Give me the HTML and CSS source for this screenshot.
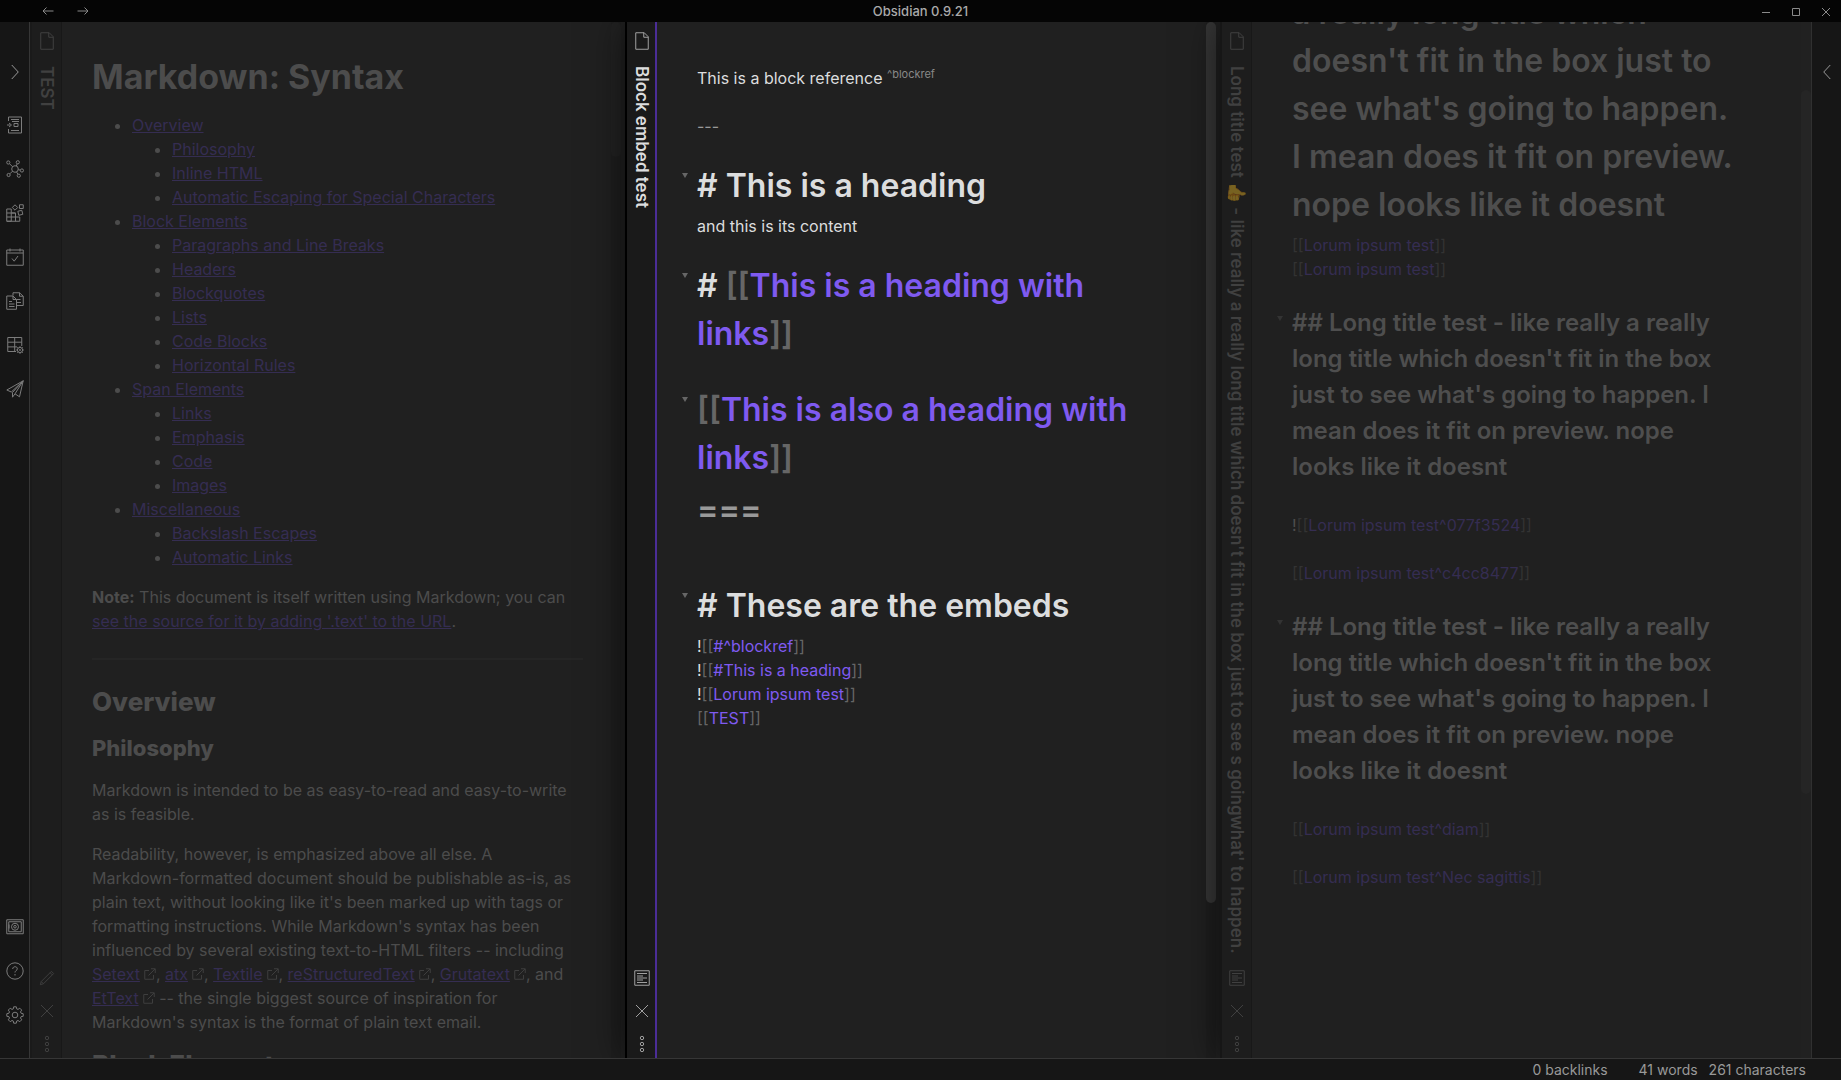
FILE: index.html
```html
<!DOCTYPE html>
<html lang="en">
<head>
<meta charset="utf-8">
<title>Obsidian 0.9.21</title>
<link rel="stylesheet" href="styles.css">
</head>
<body>
<svg class="sprite" aria-hidden="true">
  <symbol id="file" viewBox="0 0 14 18"><path d="M.75.75h8.500l4 4v12.500H.75zM8.750.75v4.500h4.500"/></symbol>
  <symbol id="cross" viewBox="0 0 14 14"><path d="M1 1l12 12M13 1L1 13"/></symbol>
  <symbol id="dots" viewBox="0 0 6 18"><circle cx="3" cy="3" r="1.700"/><circle cx="3" cy="9" r="1.700"/><circle cx="3" cy="15" r="1.700"/></symbol>
  <symbol id="pencil" viewBox="0 0 18 18"><path d="M1.500 16.500l1-3.500L14 1.500l2.500 2.500L5 15.500zM2.500 13L5 15.500M12.500 3L15 5.500"/></symbol>
  <symbol id="preview" viewBox="0 0 16 16"><path d="M.75.75h14.500v14.500H.75zM3 3.500h10M3 6h6M3 8h10M3 10h6M3 12.500h10"/></symbol>
  <symbol id="external" viewBox="0 0 12 12"><path d="M5 2.500H.75v8.750H9.500V7M7 .75h4.250V5M11 1L4.500 7.500"/></symbol>
</svg>

<header class="titlebar">
  <nav class="history">
    <button type="button" aria-label="Back"><svg width="12" height="8" viewBox="0 0 12 8"><path d="M11.500 4H1M4.500.5L1 4l3.500 3.500"/></svg></button>
    <button type="button" aria-label="Forward"><svg width="12" height="8" viewBox="0 0 12 8"><path d="M.5 4H11M7.500.5L11 4 7.500 7.500"/></svg></button>
  </nav>
  <h1 class="app-name">Obsidian 0.9.21</h1>
  <div class="window-controls">
    <button type="button" aria-label="Minimize"><svg width="10" height="10" viewBox="0 0 10 10"><path d="M1 5.500h8"/></svg></button>
    <button type="button" aria-label="Maximize"><svg width="10" height="10" viewBox="0 0 10 10"><path d="M1.500 1.500h7v7h-7z"/></svg></button>
    <button type="button" aria-label="Close"><svg width="10" height="10" viewBox="0 0 10 10"><path d="M1 1l8 8M9 1L1 9"/></svg></button>
  </div>
</header>

<div class="app">
  <aside class="ribbon">
    <button type="button" class="expand" aria-label="Expand left sidebar"><svg width="8" height="16" viewBox="0 0 8 16"><path d="M.75 1l6.500 7-6.500 7"/></svg></button>
    <button type="button" aria-label="Open quick switcher"><svg width="18" height="18" viewBox="0 0 18 18"><path d="M2.500 5V1h13v16h-13v-4M5 3.500h8M6 5.500h7M1 9h3M3 7l2.500 2L3 11M8 7.500h4v3H8zM5 14.500h8"/></svg></button>
    <button type="button" aria-label="Open graph view"><svg width="18" height="18" viewBox="0 0 18 18"><circle cx="9" cy="9" r="3.300"/><circle cx="2.300" cy="2.500" r="1.600"/><circle cx="11.800" cy="2.300" r="1.600"/><circle cx="15.900" cy="10.500" r="1.600"/><circle cx="2.600" cy="15" r="1.600"/><circle cx="12.800" cy="15.700" r="1.600"/><path d="M3.500 3.700l3 3M11.200 3.800L10.300 6M12.300 9.700l2 .4M6.500 11.200l-2.600 2.600M10.500 12l1.500 2.300"/></svg></button>
    <button type="button" aria-label="Open block browser"><svg width="18" height="18" viewBox="0 0 18 18"><path d="M.75 5h4.500v12.250H.75zM5.250 9h4.250v8.250M.75 9h8.750M.75 13h13v4.250h-13M9.500 13V9M13.500.75h3.750V4.500H13.500zM9 .8l2.700 2.700L9 6.200 6.300 3.500zM11.800 7.300l4-1 1 4-4 1z"/></svg></button>
    <button type="button" aria-label="Open daily note"><svg width="18" height="18" viewBox="0 0 18 18"><path d="M.75 2h16.500v15.250H.75zM.75 5h16.500M4 .5v3M14 .5v3M6 10.500l2.200 2.700L12 8"/></svg></button>
    <button type="button" aria-label="Insert template"><svg width="18" height="18" viewBox="0 0 18 18"><path d="M7 3.500V.75h6.500l3.750 3.500v9.250H11M13.500.75v3.500h3.750M.75 4H7l3.500 3.500v9.750H.75zM7 4v3.500h3.500M3 9.500h3M3 12h5.500M3 14.500h5.500M11 7.500h3.500M11 10.500h4"/></svg></button>
    <button type="button" aria-label="Table settings"><svg width="18" height="18" viewBox="0 0 18 18"><path d="M10 15.500H1.750V1.500h14v8.500M1.750 6.200h14M1.750 10.900H11M8.700 1.500v14"/><circle cx="14" cy="14" r="2.600"/><circle cx="14" cy="14" r=".6"/><path d="M14 10.200v1.200M14 16.600v1.200M10.200 14h1.200M16.600 14h1.200M11.300 11.300l.9.900M16.700 11.300l-.9.900M11.300 16.700l.9-.9M16.700 16.700l-.9-.9"/></svg></button>
    <button type="button" aria-label="Publish changes"><svg width="18" height="18" viewBox="0 0 18 18"><path d="M17.200.8L.8 10l4.500 2L17.200.8l-3.700 16-4.500-3L17.200.8 6.500 12.500v4.700l2.500-3.400"/></svg></button>
    <button type="button" class="to-end" aria-label="Open another vault"><svg width="18" height="16" viewBox="0 0 18 16"><path d="M.75.75h16.500v14H.75zM2.750 2.750h12.500v10H2.750zM3 5.500v4"/><circle cx="9" cy="7.750" r="3.500"/><circle cx="9" cy="7.750" r="1.300"/></svg></button>
    <button type="button" aria-label="Help"><svg width="18" height="18" viewBox="0 0 18 18"><circle cx="9" cy="9" r="8.200"/><path d="M6.700 7c0-3 4.600-3 4.600-.2 0 1.700-2.300 1.700-2.300 3.700M9 12v1.500"/></svg></button>
    <button type="button" aria-label="Settings"><svg width="18" height="18" viewBox="0 0 18 18"><circle cx="9" cy="9" r="2.800"/><path d="M7.700.8h2.600l.4 2.100 1.300.5 1.800-1.200 1.900 1.900-1.200 1.800.5 1.300 2.200.5v2.600l-2.200.4-.5 1.300 1.200 1.800-1.900 1.900-1.800-1.200-1.300.5-.4 2.200H7.700l-.4-2.200-1.300-.5-1.800 1.200-1.900-1.900 1.200-1.800-.5-1.300L.8 10.300V7.700L3 7.200l.5-1.300-1.200-1.800 1.900-1.900L6 3.400l1.300-.5z"/></svg></button>
  </aside>

  <main class="workspace">
    <section class="pane inactive">
      <header class="pane-header">
        <svg class="icon" width="14" height="18"><use href="#file"/></svg>
        <h2 class="pane-title">TEST</h2>
        <div class="pane-actions">
          <button type="button" aria-label="Edit"><svg width="16" height="16"><use href="#pencil"/></svg></button>
          <button type="button" aria-label="Close"><svg width="14" height="14"><use href="#cross"/></svg></button>
          <button type="button" aria-label="More options"><svg width="6" height="18"><use href="#dots"/></svg></button>
        </div>
      </header>
      <article class="preview">
        <h1>Markdown: Syntax</h1>
        <ul>
          <li><a href="#overview">Overview</a>
            <ul>
              <li><a href="#philosophy">Philosophy</a></li>
              <li><a href="#html">Inline HTML</a></li>
              <li><a href="#autoescape">Automatic Escaping for Special Characters</a></li>
            </ul>
          </li>
          <li><a href="#block">Block Elements</a>
            <ul>
              <li><a href="#p">Paragraphs and Line Breaks</a></li>
              <li><a href="#header">Headers</a></li>
              <li><a href="#blockquote">Blockquotes</a></li>
              <li><a href="#list">Lists</a></li>
              <li><a href="#precode">Code Blocks</a></li>
              <li><a href="#hr">Horizontal Rules</a></li>
            </ul>
          </li>
          <li><a href="#span">Span Elements</a>
            <ul>
              <li><a href="#link">Links</a></li>
              <li><a href="#em">Emphasis</a></li>
              <li><a href="#code">Code</a></li>
              <li><a href="#img">Images</a></li>
            </ul>
          </li>
          <li><a href="#misc">Miscellaneous</a>
            <ul>
              <li><a href="#backslash">Backslash Escapes</a></li>
              <li><a href="#autolink">Automatic Links</a></li>
            </ul>
          </li>
        </ul>
        <p><strong>Note:</strong> This document is itself written using Markdown; you can <a href="#source">see the source for it by adding '.text' to the URL</a>.</p>
        <hr>
        <h2 id="overview">Overview</h2>
        <h3 id="philosophy">Philosophy</h3>
        <p>Markdown is intended to be as easy-to-read and easy-to-write as is feasible.</p>
        <p>Readability, however, is emphasized above all else. A Markdown-formatted document should be publishable as-is, as plain text, without looking like it's been marked up with tags or formatting instructions. While Markdown's syntax has been influenced by several existing text-to-HTML filters -- including <a href="#setext">Setext</a><svg class="ext" width="12" height="12"><use href="#external"/></svg>, <a href="#atx">atx</a><svg class="ext" width="12" height="12"><use href="#external"/></svg>, <a href="#textile">Textile</a><svg class="ext" width="12" height="12"><use href="#external"/></svg>, <a href="#rst">reStructuredText</a><svg class="ext" width="12" height="12"><use href="#external"/></svg>, <a href="#grutatext">Grutatext</a><svg class="ext" width="12" height="12"><use href="#external"/></svg>, and <a href="#ettext">EtText</a><svg class="ext" width="12" height="12"><use href="#external"/></svg> -- the single biggest source of inspiration for Markdown's syntax is the format of plain text email.</p>
        <h2 id="block">Block Elements</h2>
      </article>
      <div class="scrollbar"><div class="thumb thumb-short"></div></div>
    </section>

    <section class="pane active">
      <header class="pane-header">
        <svg class="icon" width="14" height="18"><use href="#file"/></svg>
        <h2 class="pane-title">Block embed test</h2>
        <div class="pane-actions">
          <button type="button" aria-label="Preview"><svg width="16" height="16"><use href="#preview"/></svg></button>
          <button type="button" aria-label="Close"><svg width="14" height="14"><use href="#cross"/></svg></button>
          <button type="button" aria-label="More options"><svg width="6" height="18"><use href="#dots"/></svg></button>
        </div>
      </header>
      <article class="editor">
        <p>This is a block reference <span class="block-id">^blockref</span></p>
        <p class="spaced muted">---</p>
        <h1><button type="button" class="fold" aria-label="Fold"></button># This is a heading</h1>
        <p>and this is its content</p>
        <h1><button type="button" class="fold" aria-label="Fold"></button># <span class="br">[[</span><a href="#l1">This is a heading with links</a><span class="br">]]</span></h1>
        <h1><button type="button" class="fold" aria-label="Fold"></button><span class="br">[[</span><a href="#l2">This is also a heading with links</a><span class="br">]]</span></h1>
        <p class="underline muted">===</p>
        <h1><button type="button" class="fold" aria-label="Fold"></button># These are the embeds</h1>
        <p>!<span class="br">[[</span><a href="#e1">#^blockref</a><span class="br">]]</span></p>
        <p>!<span class="br">[[</span><a href="#e2">#This is a heading</a><span class="br">]]</span></p>
        <p>!<span class="br">[[</span><a href="#e3">Lorum ipsum test</a><span class="br">]]</span></p>
        <p><span class="br">[[</span><a href="#e4">TEST</a><span class="br">]]</span></p>
      </article>
      <div class="scrollbar"><div class="thumb thumb-long"></div></div>
    </section>

    <section class="pane inactive last">
      <header class="pane-header">
        <svg class="icon" width="14" height="18"><use href="#file"/></svg>
        <h2 class="pane-title">Long title test <span class="emoji">👍</span> - like really a really long title which doesn't fit in the box just to see s goingwhat' to happen.</h2>
        <div class="pane-actions">
          <button type="button" aria-label="Preview"><svg width="16" height="16"><use href="#preview"/></svg></button>
          <button type="button" aria-label="Close"><svg width="14" height="14"><use href="#cross"/></svg></button>
          <button type="button" aria-label="More options"><svg width="6" height="18"><use href="#dots"/></svg></button>
        </div>
      </header>
      <article class="editor scrolled">
        <h1>a really long title which doesn't fit in the box just to see what's going to happen. I mean does it fit on preview. nope looks like it doesnt</h1>
        <p><span class="br">[[</span><a href="#r1">Lorum ipsum test</a><span class="br">]]</span></p>
        <p><span class="br">[[</span><a href="#r2">Lorum ipsum test</a><span class="br">]]</span></p>
        <h2><button type="button" class="fold" aria-label="Fold"></button>## Long title test - like really a really long title which doesn't fit in the box just to see what's going to happen. I mean does it fit on preview. nope looks like it doesnt</h2>
        <p class="spaced">!<span class="br">[[</span><a href="#r3">Lorum ipsum test^077f3524</a><span class="br">]]</span></p>
        <p class="spaced"><span class="br">[[</span><a href="#r4">Lorum ipsum test^c4cc8477</a><span class="br">]]</span></p>
        <h2><button type="button" class="fold" aria-label="Fold"></button>## Long title test - like really a really long title which doesn't fit in the box just to see what's going to happen. I mean does it fit on preview. nope looks like it doesnt</h2>
        <p class="spaced"><span class="br">[[</span><a href="#r5">Lorum ipsum test^diam</a><span class="br">]]</span></p>
        <p class="spaced"><span class="br">[[</span><a href="#r6">Lorum ipsum test^Nec sagittis</a><span class="br">]]</span></p>
      </article>
      <div class="scrollbar"><div class="thumb thumb-offset"></div></div>
    </section>
  </main>

  <aside class="ribbon right">
    <button type="button" class="expand" aria-label="Expand right sidebar"><svg width="8" height="16" viewBox="0 0 8 16"><path d="M7.250 1L.75 8l6.500 7"/></svg></button>
  </aside>
</div>

<footer class="status">
  <span class="backlinks">0 backlinks</span>
  <span>41 words</span>
  <span>261 characters</span>
</footer>
</body>
</html>
```
FILE: styles.css
```css
* { box-sizing: border-box; }

body {
  margin: 0;
  height: 100vh;
  display: flex;
  flex-direction: column;
  overflow: hidden;
  background: #161616;
  color: #dcddde;
  font: 16px/24px Inter, "Noto Sans", sans-serif;
}

h1, h2, h3, p, ul { margin: 0; }

button {
  display: flex;
  align-items: center;
  justify-content: center;
  padding: 0;
  border: 0;
  background: none;
  color: inherit;
}

svg { fill: none; stroke: currentColor; }
.sprite { display: none; }

/* title bar */
.titlebar {
  display: grid;
  grid-template-columns: 1fr auto 1fr;
  align-items: center;
  height: 22px;
  background: #050505;
  color: #8a8a8a;
}
.history { display: flex; gap: 23px; padding-left: 42px; }
.app-name { color: #aaa; font-size: 13px; font-weight: 500; line-height: 22px; }
.window-controls { display: flex; justify-content: flex-end; gap: 20px; padding: 2px 10px 0 0; }

/* layout */
.app { display: flex; flex: 1; min-height: 0; }

.ribbon {
  display: flex;
  flex-direction: column;
  width: 30px;
  padding: 28px 0 21px;
  border-right: 1px solid #363636;
  color: #7c7c7c;
}
.ribbon button { height: 44px; }
.ribbon .expand { margin-bottom: 9px; color: #999; }
.ribbon .to-end { margin-top: auto; }
.ribbon.right { border-right: 0; border-left: 1px solid #303030; }

.workspace {
  display: grid;
  grid-template-columns: 595fr 595fr 591fr;
  flex: 1;
  min-width: 0;
  overflow: hidden;
}

.pane {
  position: relative;
  display: flex;
  min-width: 0;
  min-height: 0;
  padding-right: 4px;
  border-left: 2px solid #1a1a1a;
  background: #202020;
  box-shadow: 0 0 36px rgba(0, 0, 0, .6);
}
.pane.active { border-left-color: #000; }
.pane.last { padding-right: 0; border-left-color: #161616; }

.pane-header {
  display: flex;
  flex-direction: column;
  align-items: center;
  flex: none;
  width: 30px;
  padding: 10px 0 0 1px;
  border-right: 1px solid #181818;
  background: #1d1d1d;
  color: #404040;
}
.active .pane-header { padding-left: 2px; border-right: 2px solid #4b2d97; background: #1a1a1a; color: #a0a0a0; }
.icon { flex: none; }
.pane-title {
  flex: 1;
  min-height: 0;
  margin-top: 16px;
  font-size: 17px;
  font-weight: 600;
  line-height: 24px;
  white-space: nowrap;
  writing-mode: vertical-rl;
  text-orientation: sideways;
}
.active .pane-title { color: #dcddde; }
.emoji { opacity: .4; }
.pane-actions { display: flex; flex-direction: column; align-items: center; gap: 5px; }
.pane-actions button { width: 26px; height: 28px; }

.scrollbar { flex: none; width: 10px; background: #1e1e1e; }
.thumb { border-radius: 5px; background: #222; }
.thumb-short { height: 13%; }
.thumb-long { height: 85%; background: #363636; }
.thumb-offset { height: 68%; background: #252525; transform: translateY(68px); }
.last .scrollbar { background: #212121; }

/* rendered markdown */
.preview { flex: 1; min-width: 0; padding: 29px 28px 0 30px; overflow: hidden; color: #4c4c4c; }
.preview h1 { margin-bottom: 11px; font-size: 34px; font-weight: 700; line-height: 51px; }
.preview h2 { font-size: 26px; font-weight: 800; line-height: 30px; }
.preview h3 { margin: 17px 0 16px; font-size: 22px; font-weight: 800; line-height: 28px; }
.preview ul { padding-left: 40px; list-style: disc; }
.preview p { margin: 16px 0; }
.preview strong { font-weight: 700; }
.preview a { color: #352d52; text-decoration: underline; }
.preview hr { margin: 25px 0 27px; border: 0; border-top: 2px solid #252525; }
.ext { margin-left: 4px; color: #3e3e3e; }

/* markdown source */
.editor { flex: 1; min-width: 0; padding: 44px 63px 0 40px; overflow: hidden; }
.editor h1, .editor h2 { position: relative; margin-top: 24px; padding-bottom: 4px; font-weight: 600; }
.editor h1 { font-size: 32px; line-height: 48px; }
.editor h2 { font-size: 24px; line-height: 36px; }
.editor a { color: #7f5af0; text-decoration: none; }
.editor .spaced { margin: 24px 0; }
.editor .spaced + .spaced { margin-top: 0; }
.editor .underline { margin-bottom: 48px; font-size: 32px; font-weight: 600; line-height: 48px; }
.editor .muted { color: #999; }
.br { color: #666; }
.block-id { color: #888; font-size: 11px; line-height: 12px; vertical-align: super; }
.fold {
  position: absolute;
  top: 11px;
  left: -15px;
  border: 3px solid transparent;
  border-top: 5px solid #666;
  border-bottom: 0;
}
.scrolled { padding-top: 0; color: #4e4e4e; }
.editor.scrolled h1 { margin-top: -33px; }
.scrolled a { color: #352d52; }
.editor.scrolled a { color: #352d52; }
.scrolled .br { color: #333; }
.scrolled .fold { border-top-color: #333; }

/* status bar */
.status {
  display: flex;
  justify-content: flex-end;
  gap: 11px;
  height: 22px;
  padding-right: 35px;
  border-top: 1px solid #363636;
  color: #999;
  font-size: 14px;
  line-height: 22px;
}
.backlinks { margin-right: 20px; }
```
